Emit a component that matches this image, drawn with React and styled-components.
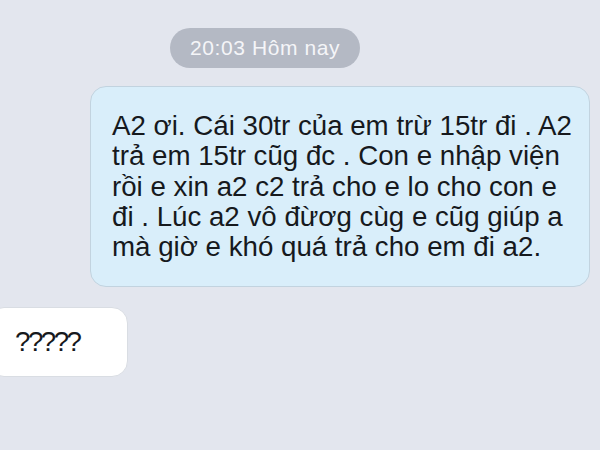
import React from "react";
import styled, { createGlobalStyle } from "styled-components";

const Global = createGlobalStyle`
  html, body { margin: 0; padding: 0; background: #e3e6ee; }
  body { font-family: "Liberation Sans", Arial, sans-serif; }
`;

const Screen = styled.div`
  width: 600px;
  height: 450px;
  overflow: hidden;
  background: #e3e6ee;
  display: flex;
  flex-direction: column;
  padding-top: 28px;
  box-sizing: border-box;
`;

const TimePill = styled.div`
  align-self: flex-start;
  margin-left: 170px;
  width: 190px;
  height: 40px;
  border-radius: 20px;
  background: #b4b9c4;
  color: #f4f5f8;
  font-size: 21px;
  letter-spacing: 0.6px;
  display: flex;
  align-items: center;
  justify-content: center;
`;

const Bubble = styled.div`
  box-sizing: border-box;
  font-size: 27.7px;
  line-height: 30.25px;
  color: #16191d;
  border-radius: 16px;
  background: ${(p) => (p.$out ? "#d9eefa" : "#ffffff")};
  border: 1px solid ${(p) => (p.$out ? "#c2d3df" : "#d9dde3")};
`;

const OutBubble = styled(Bubble)`
  align-self: flex-end;
  margin-right: 10px;
  margin-top: 18px;
  width: 500px;
  height: 201px;
  padding: 24px 0 0 21px;
`;

const OutText = styled.div`
  width: 462px;
`;

const InBubble = styled(Bubble)`
  align-self: flex-start;
  margin-left: -12px;
  margin-top: 20px;
  width: 140px;
  height: 70px;
  padding: 19px 0 0 26px;
  letter-spacing: -2.5px;
`;

export default function App() {
  return (
    <Screen>
      <Global />
      <TimePill>20:03 Hôm nay</TimePill>
      <OutBubble $out>
        <OutText>
          A2 ơi. Cái 30tr của em trừ 15tr đi . A2 trả em 15tr cũg đc . Con e nhập viện rồi e xin a2 c2 trả cho e lo cho con e đi . Lúc a2 vô đừơg cùg e cũg giúp a mà giờ e khó quá trả cho em đi a2.
        </OutText>
      </OutBubble>
      <InBubble>?????</InBubble>
    </Screen>
  );
}
